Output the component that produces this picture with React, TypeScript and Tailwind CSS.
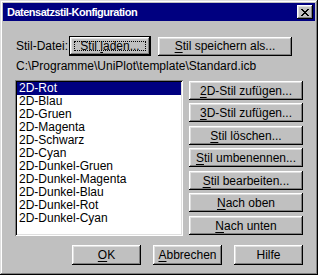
import React from 'react'

const BEVEL =
  'shadow-[inset_-1px_-1px_#000,inset_1px_1px_#fff,inset_-2px_-2px_#808080,inset_2px_2px_#dfdfdf]'

const ITEMS = [
  '2D-Rot',
  '2D-Blau',
  '2D-Gruen',
  '2D-Magenta',
  '2D-Schwarz',
  '2D-Cyan',
  '2D-Dunkel-Gruen',
  '2D-Dunkel-Magenta',
  '2D-Dunkel-Blau',
  '2D-Dunkel-Rot',
  '2D-Dunkel-Cyan',
]

function Btn({
  children,
  className = '',
}: {
  children: React.ReactNode
  className?: string
}) {
  return (
    <div
      className={`flex items-center justify-center bg-[#c0c0c0] text-black ${BEVEL} ${className}`}
    >
      <span className="leading-none">{children}</span>
    </div>
  )
}

function U({ children }: { children: React.ReactNode }) {
  return <span className="underline underline-offset-[2px]">{children}</span>
}

export default function App() {
  return (
    <div
      className="w-[318px] h-[275px] bg-[#c0c0c0] p-[3px] text-[12px] text-black shadow-[inset_-1px_-1px_#000,inset_1px_1px_#dfdfdf,inset_-2px_-2px_#808080,inset_2px_2px_#fff]"
      style={{ fontFamily: '"Liberation Sans", Arial, sans-serif' }}
    >
      {/* title bar */}
      <div className="h-[18px] bg-[#000080] flex items-center justify-between pl-[4px] pr-[2px]">
        <span className="text-white font-bold text-[11px] tracking-[-0.5px] leading-none">Datensatzstil-Konfiguration</span>
        <div className={`w-[16px] h-[14px] bg-[#c0c0c0] flex items-center justify-center ${BEVEL}`}>
          <svg width="8" height="7" viewBox="0 0 8 7" shapeRendering="crispEdges">
            <path
              d="M0 0h2v1h-2zM6 0h2v1h-2zM1 1h2v1h-2zM5 1h2v1h-2zM2 2h4v1h-4zM3 3h2v1h-2zM2 4h4v1h-4zM1 5h2v1h-2zM5 5h2v1h-2zM0 6h2v1h-2zM6 6h2v1h-2z"
              fill="#000"
            />
          </svg>
        </div>
      </div>

      <div className="px-[12px]">
        {/* file row */}
        <div className="mt-[15px] flex items-center h-[20px]">
          <div className="w-[54px] pl-[1px]">Stil-Datei:</div>
          <div className="w-[82px] h-[20px] border border-black">
            <Btn className="w-full h-full relative">
              Stil <U>l</U>aden...
              <span className="absolute left-[4px] right-[4px] top-[4px] bottom-[4px] border border-dotted border-black" />
            </Btn>
          </div>
          <Btn className="ml-[7px] w-[134px] h-[19px]">
            <U>S</U>til speichern als...
          </Btn>
        </div>

        <div className="mt-[4px] h-[13px] leading-[13px] pl-[1px]">
          C:\Programme\UniPlot\template\Standard.icb
        </div>

        {/* list + buttons */}
        <div className="mt-[7px] flex">
          <div className="w-[168px] h-[156px] bg-white p-[2px] shadow-[inset_1px_1px_#808080,inset_-1px_-1px_#fff,inset_2px_2px_#000,inset_-2px_-2px_#dfdfdf]">
            {ITEMS.map((it, i) => (
              <div
                key={it}
                className={`h-[13px] leading-[13px] pl-[2px] ${i === 0 ? 'bg-[#000080] text-white' : ''}`}
              >
                {it}
              </div>
            ))}
          </div>

          <div className="ml-[6px] w-[114px] pt-[1px] flex flex-col">
            <Btn className="h-[19px]">
              <U>2</U>D-Stil zufügen...
            </Btn>
            <Btn className="h-[19px] mt-[3px]">
              <U>3</U>D-Stil zufügen...
            </Btn>
            <Btn className="h-[19px] mt-[4px]">
              <U>S</U>til löschen...
            </Btn>
            <Btn className="h-[19px] mt-[3px]">
              <U>S</U>til umbenennen...
            </Btn>
            <Btn className="h-[19px] mt-[4px]">
              <U>S</U>til bearbeiten...
            </Btn>
            <Btn className="h-[19px] mt-[3px]">
              <U>N</U>ach oben
            </Btn>
            <Btn className="h-[19px] mt-[4px]">
              <U>N</U>ach unten
            </Btn>
          </div>
        </div>

        {/* bottom buttons */}
        <div className="mt-[9px] flex pl-[57px] gap-[12px]">
          <Btn className="w-[69px] h-[20px]">
            <U>O</U>K
          </Btn>
          <Btn className="w-[69px] h-[20px]">
            <U>A</U>bbrechen
          </Btn>
          <Btn className="w-[69px] h-[20px]">Hilfe</Btn>
        </div>
      </div>
    </div>
  )
}
